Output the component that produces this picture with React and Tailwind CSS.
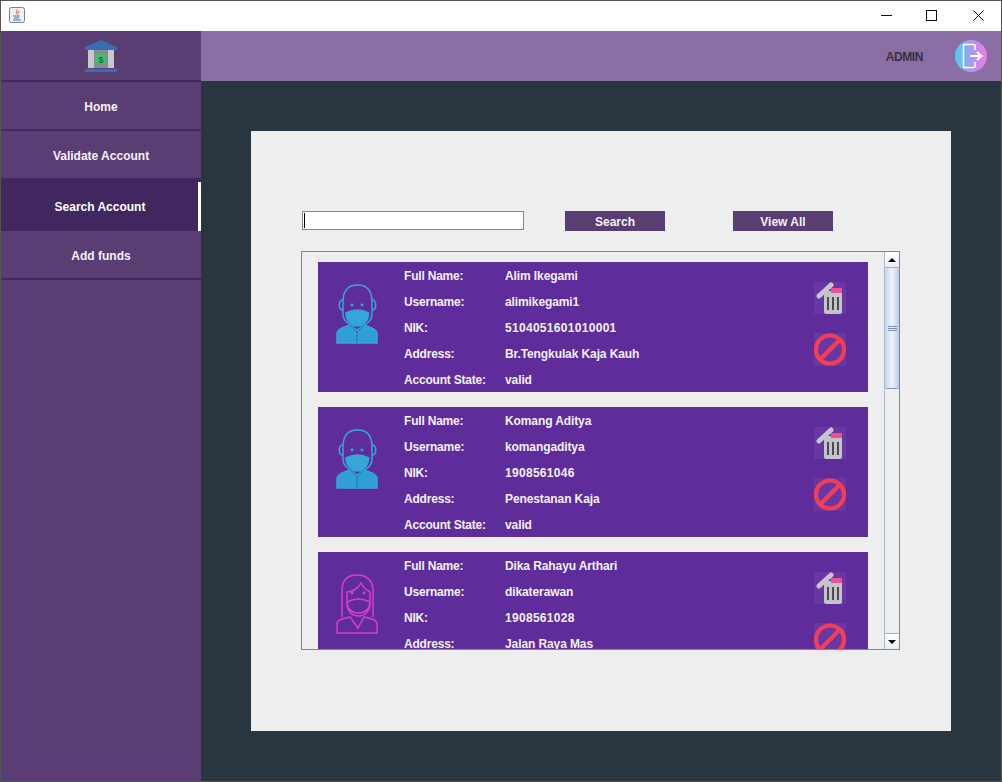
const sans = "font-['Liberation_Sans',Arial,sans-serif]";

const accounts = [
  { name: 'Alim Ikegami', username: 'alimikegami1', nik: '5104051601010001', address: 'Br.Tengkulak Kaja Kauh', state: 'valid', avatar: 'male' },
  { name: 'Komang Aditya', username: 'komangaditya', nik: '1908561046', address: 'Penestanan Kaja', state: 'valid', avatar: 'male' },
  { name: 'Dika Rahayu Arthari', username: 'dikaterawan', nik: '1908561028', address: 'Jalan Raya Mas', state: 'valid', avatar: 'female' },
];

const JavaIcon = () => (
  <svg width="16" height="16" viewBox="0 0 16 16">
    <rect x="0.5" y="0.5" width="15" height="15" rx="2" fill="#eef1f5" stroke="#6f7f93" />
    <path d="M8 2c1.500 2-2 3-.5 5M10 4c.5 1.500-2 2-1 3.500" fill="none" stroke="#e2792a" strokeWidth="1.100" />
    <path d="M4 9h7M5 11h5M4 13h8" stroke="#4c6f9c" strokeWidth="1" />
  </svg>
);

const WindowButtons = () => (
  <div className="flex items-center pb-[2px]">
    <div className="flex w-[46px] justify-center">
      <svg width="11" height="11" viewBox="0 0 11 11"><path d="M0 5.500H11" stroke="#111" /></svg>
    </div>
    <div className="flex w-[46px] justify-center pr-[2px]">
      <svg width="11" height="11" viewBox="0 0 11 11"><rect x="0.500" y="0.500" width="10" height="10" fill="none" stroke="#111" /></svg>
    </div>
    <div className="flex w-[46px] justify-center">
      <svg width="11" height="11" viewBox="0 0 11 11"><path d="M0.500 0.500L10.500 10.500M10.500 0.500L0.500 10.500" stroke="#111" /></svg>
    </div>
  </div>
);

const BankIcon = () => (
  <svg width="32" height="32" viewBox="0 0 32 32">
    <path d="M16 0 L32 7 V10 H0 V7 Z" fill="#3a6cb0" />
    <rect x="3" y="10" width="26" height="18" fill="#7f8f92" />
    <rect x="3" y="10" width="6" height="18" fill="#c8c9cc" />
    <rect x="23" y="10" width="6" height="18" fill="#c8c9cc" />
    <circle cx="16" cy="19" r="5.500" fill="#35c46f" />
    <text x="16" y="22.500" textAnchor="middle" fontSize="9" fontWeight="700" fill="#14703e" fontFamily="Liberation Sans">$</text>
    <rect x="0" y="29" width="32" height="3" fill="#3a6cb0" />
  </svg>
);

const LogoutIcon = () => (
  <svg width="32" height="32" viewBox="0 0 32 32">
    <defs>
      <linearGradient id="logout" x1="0" y1="0" x2="1" y2="0">
        <stop offset="0" stopColor="#45d4f5" />
        <stop offset="0.500" stopColor="#a79bf0" />
        <stop offset="1" stopColor="#f278e2" />
      </linearGradient>
    </defs>
    <circle cx="16" cy="16" r="16" fill="url(#logout)" />
    <path d="M20 10V5.500Q20 4.500 19 4.500H9.500Q8.500 4.500 8.500 5.500V26.500Q8.500 27.500 9.500 27.500H19Q20 27.500 20 26.500V22" fill="none" stroke="#fff" strokeWidth="1.500" />
    <path d="M15 16H26M22 12L26.500 16L22 20" fill="none" stroke="#fff" strokeWidth="2" />
  </svg>
);

const MaleAvatar = () => (
  <svg width="42" height="60" viewBox="0 0 42 60" fill="none" stroke="#34a6d8" strokeWidth="1.500">
    <path d="M7 18C7 7 12 1 21.500 1S36 7 36 18v12c0 7-6 12-14.500 12S7 37 7 30z" />
    <path d="M7 16c-5 0-5 10 0 10M36 16c5 0 5 10 0 10" />
    <path d="M10 29c4-2 8-3 11.500-3s7.500 1 11 3c0 8-5 12-11 12S10 37 10 29z" fill="#34a6d8" />
    <circle cx="16" cy="21" r="0.700" />
    <circle cx="26" cy="21" r="0.700" />
    <path d="M1 59V50c0-4 4-6 13-9l7 5 7-5c9 3 13 5 13 9v9z" fill="#2f9fd5" />
    <path d="M14 41l7 7 7-7M21 48v11" stroke="#1f78ab" strokeWidth="1" />
  </svg>
);

const FemaleAvatar = () => (
  <svg width="42" height="60" viewBox="0 0 42 60" fill="none" stroke="#d93fc9" strokeWidth="1.500">
    <path d="M6 43V17C6 6 12 1 21 1s16 5 16 16v26" />
    <path d="M11 18c5 0 11-3 14-9 2 4 5 7 9 9v11c0 8-5 13-11.500 13S11 37 11 29z" />
    <path d="M11 28c4-2 8-3 11.500-3s7.500 1 11.500 3c0 7-5 11-11.500 11S11 35 11 28z" />
    <circle cx="16" cy="19" r="0.700" />
    <circle cx="28" cy="19" r="0.700" />
    <path d="M1 59V50c0-4 4-5 13-7l8 11 6-11c9 2 13 3 13 7v9z" />
  </svg>
);

const TrashIcon = () => (
  <svg width="32" height="32" viewBox="0 0 32 32" className="bg-[#6f3fa8]/60">
    <path d="M5 14L17 3" stroke="#c6c6d0" strokeWidth="5" strokeLinecap="round" />
    <rect x="10" y="9" width="18" height="23" rx="2" fill="#c3c4c9" />
    <rect x="17" y="6" width="11" height="5" fill="#ee4f95" />
    <path d="M14 15V28M19 15V28M24 15V28" stroke="#4b4b52" strokeWidth="2" />
  </svg>
);

const BanIcon = () => (
  <svg width="32" height="33" viewBox="0 0 32 33" className="bg-[#6f3fa8]/60">
    <circle cx="16" cy="16.500" r="14" fill="none" stroke="#f73d55" strokeWidth="4.200" />
    <path d="M6 26.500L26 6.500" stroke="#f73d55" strokeWidth="4.200" />
  </svg>
);

const Field = ({ label, value, valueClass = 'tracking-[-0.1px]' }) => (
  <div className="flex h-[26px] items-center">
    <span className="w-[101px] tracking-[-0.2px]">{label}</span>
    <span className={valueClass}>{value}</span>
  </div>
);

const AccountCard = ({ account }) => (
  <div className="flex h-[130px] w-[550px] shrink-0 bg-[#5f2c9c] text-xs font-bold text-[#f4f1f8]">
    <div className="w-[86px] shrink-0 pl-[18px] pt-[22px]">
      {account.avatar === 'male' ? <MaleAvatar /> : <FemaleAvatar />}
    </div>
    <div className="w-[410px] shrink-0 pt-[1px]">
      <Field label="Full Name:" value={account.name} />
      <Field label="Username:" value={account.username} />
      <Field label="NIK:" value={account.nik} valueClass="tracking-[0.3px]" />
      <Field label="Address:" value={account.address} />
      <Field label="Account State:" value={account.state} />
    </div>
    <div className="flex flex-col gap-[19px] pt-[20px]">
      <TrashIcon />
      <BanIcon />
    </div>
  </div>
);

const Scrollbar = () => (
  <div className="flex w-[15px] shrink-0 flex-col border-l border-[#a9b8c6] bg-[#eeeeef]">
    <div className="flex h-[16px] items-center justify-center border-b border-[#a3b3c3] bg-gradient-to-b from-white to-[#e8edf3]">
      <div className="h-0 w-0 border-x-[4px] border-b-[4px] border-x-transparent border-b-black" />
    </div>
    <div className="flex h-[121px] flex-col items-center justify-center gap-[1px] rounded-[2px] border-b border-[#7f98b5] bg-gradient-to-r from-[#c5d6ec] via-[#eef3fa] to-[#b9cde6]">
      <div className="h-px w-[9px] bg-[#7d8fa8]" />
      <div className="h-px w-[9px] bg-[#7d8fa8]" />
      <div className="h-px w-[9px] bg-[#7d8fa8]" />
    </div>
    <div className="flex-1" />
    <div className="flex h-[16px] items-center justify-center border-t border-[#a3b3c3] bg-gradient-to-b from-white to-[#e8edf3]">
      <div className="h-0 w-0 border-x-[4px] border-t-[4px] border-x-transparent border-t-black" />
    </div>
  </div>
);

const NavItem = ({ label, active }) =>
  active ? (
    <div className="flex h-[51px] bg-[#41265f] text-xs font-bold text-white">
      <div className="flex flex-1 items-center justify-center pl-[1px] pt-[2px]">{label}</div>
      <div className="mt-[2px] w-[3px] bg-white" />
    </div>
  ) : (
    <div className="flex h-[49px] items-center justify-center border-b-2 border-[#44265f] bg-[#5a3d73] pt-[2px] text-xs font-bold text-[#f4f1f8]">
      {label}
    </div>
  );

export default function App() {
  return (
    <div className={`flex h-[782px] w-[1002px] flex-col overflow-hidden border border-[#555] ${sans}`}>
      {/* Title bar */}
      <div className="flex h-[30px] shrink-0 items-center justify-between bg-white pl-[8px]">
        <div className="pb-[2px]"><JavaIcon /></div>
        <WindowButtons />
      </div>

      <div className="flex min-h-0 flex-1">
        {/* Sidebar */}
        <div className="flex w-[200px] shrink-0 flex-col bg-[#5a3d73]">
          <div className="flex h-[51px] shrink-0 items-center justify-center border-b-2 border-[#44265f]">
            <BankIcon />
          </div>
          <NavItem label="Home" />
          <NavItem label="Validate Account" />
          <NavItem label="Search Account" active />
          <NavItem label="Add funds" />
        </div>

        <div className="flex min-w-0 flex-1 flex-col bg-[#2a363f]">
          {/* Header */}
          <div className="flex h-[50px] shrink-0 items-center justify-end bg-[#8b6ea3] pr-[14px]">
            <span className="mr-[32px] pt-[2px] text-xs font-bold tracking-[-0.4px] text-[#3a2e48]">ADMIN</span>
            <LogoutIcon />
          </div>

          {/* Content */}
          <div className="p-[50px]">
            <div className="h-[600px] w-[700px] bg-[#eeeeef] px-[50px] pt-[80px]">
              <div className="flex h-[20px] items-start">
                <div className="ml-[1px] h-[19px] w-[222px] border border-[#7d8790] bg-white">
                  <div className="ml-[1px] mt-[1px] h-[15px] w-px bg-black" />
                </div>
                <button className="ml-[41px] h-[20px] w-[100px] bg-[#5a3d73] pt-[2px] text-xs font-bold text-[#f4f1f8]">Search</button>
                <button className="ml-[68px] h-[20px] w-[100px] bg-[#5a3d73] pt-[2px] text-xs font-bold text-[#f4f1f8]">View All</button>
              </div>

              <div className="mt-[20px] flex h-[399px] w-[599px] border border-[#7d8790] bg-[#eeeeef]">
                <div className="flex min-w-0 flex-1 flex-col gap-[15px] overflow-hidden pl-[16px] pt-[10px]">
                  {accounts.map((account) => (
                    <AccountCard key={account.username} account={account} />
                  ))}
                </div>
                <Scrollbar />
              </div>
            </div>
          </div>
        </div>
      </div>
    </div>
  );
}
